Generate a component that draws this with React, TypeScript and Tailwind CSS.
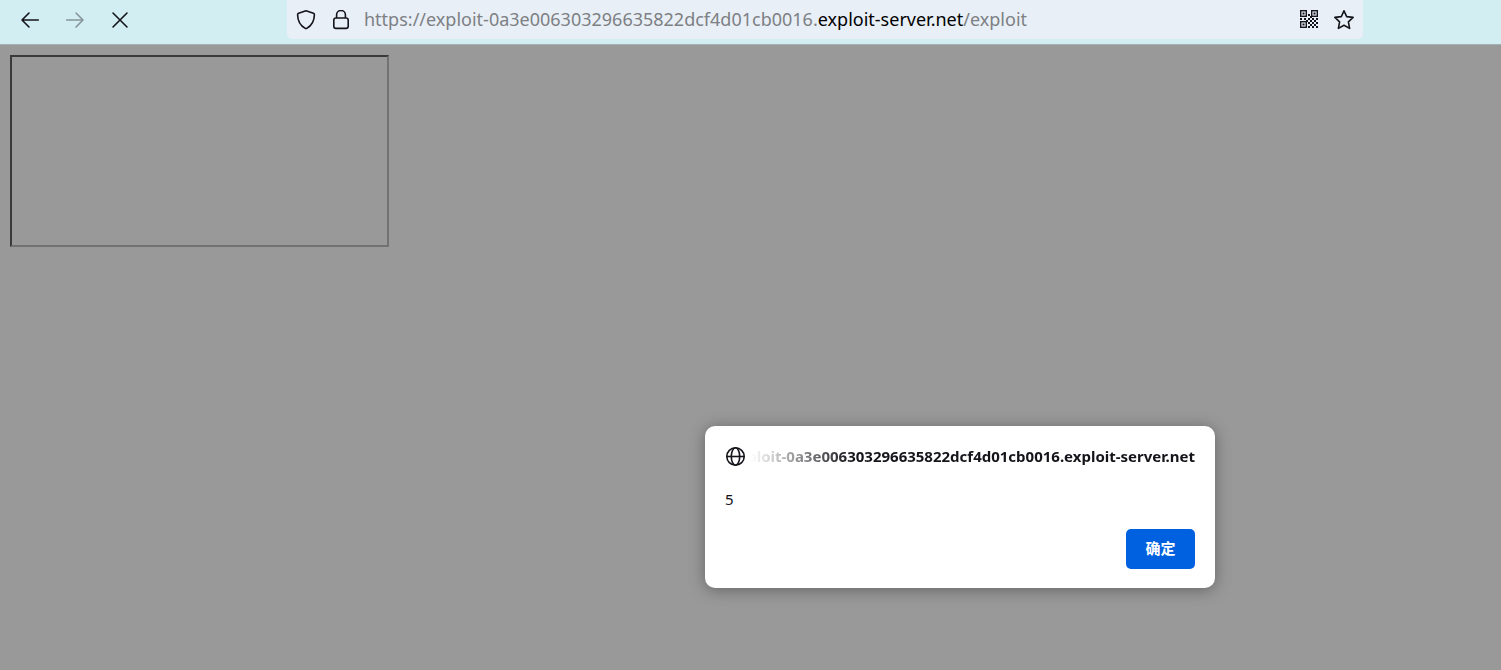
import React from "react";

const modules = [
  [8, 4], [8, 8], [4, 8], [0, 8],
  [12, 8], [16, 8], [10, 10], [14, 10], [8, 12], [12, 12], [16, 12],
  [10, 14], [14, 14], [8, 16], [12, 16], [16, 16], [10, 6], [6, 10],
];

function BackIcon() {
  return (
    <svg width="20" height="20" viewBox="0 0 20 20" fill="none" stroke="currentColor" strokeWidth="1.6" strokeLinecap="round" strokeLinejoin="round" aria-hidden="true">
      <path d="M18.3 10H2M9 3L2 10l7 7" />
    </svg>
  );
}

function ForwardIcon() {
  return (
    <svg width="20" height="20" viewBox="0 0 20 20" fill="none" stroke="currentColor" strokeWidth="1.6" strokeLinecap="round" strokeLinejoin="round" aria-hidden="true">
      <path d="M1.7 10H18M11 3l7 7-7 7" />
    </svg>
  );
}

function StopIcon() {
  return (
    <svg width="20" height="20" viewBox="0 0 20 20" fill="none" stroke="currentColor" strokeWidth="1.6" strokeLinecap="round" aria-hidden="true">
      <path d="M3 3l14 14M17 3L3 17" />
    </svg>
  );
}

function ShieldIcon() {
  return (
    <svg width="20" height="20" viewBox="0 0 20 20" fill="none" stroke="currentColor" strokeWidth="1.6" strokeLinejoin="round" aria-hidden="true">
      <path d="M10 .8L17.4 3.2q1 .4 1 1.500C18.3 11 15.500 15.700 10.700 18.400q-.7.400-1.400 0C4.500 15.700 1.700 11 1.600 4.700q0-1.100 1-1.500z" />
    </svg>
  );
}

function LockIcon() {
  return (
    <svg width="20" height="20" viewBox="0 0 20 20" fill="none" stroke="currentColor" strokeWidth="1.6" aria-hidden="true">
      <rect x="2.8" y="8" width="14.4" height="10.4" rx="2.2" />
      <path d="M5.6 8V4.700a4.400 4.200 0 0 1 8.800 0V8" />
    </svg>
  );
}

function QrIcon() {
  return (
    <svg width="18" height="18" viewBox="0 0 18 18" fill="currentColor" aria-hidden="true">
      {[[0, 0], [11, 0], [0, 11]].map(([x, y]) => (
        <g key={`${x}-${y}`}>
          <rect x={x + 0.7} y={y + 0.7} width="5.6" height="5.6" fill="none" stroke="currentColor" strokeWidth="1.4" />
          <rect x={x + 2.5} y={y + 2.5} width="2" height="2" />
        </g>
      ))}
      {modules.map(([x, y]) => (
        <rect key={`${x}-${y}`} x={x} y={y} width="2" height="2" />
      ))}
    </svg>
  );
}

function StarIcon() {
  return (
    <svg width="20" height="20" viewBox="0 0 20 20" fill="none" stroke="currentColor" strokeWidth="1.6" strokeLinejoin="round" aria-hidden="true">
      <path d="M10 .8l2.7 5.8 6.400.8-4.700 4.400 1.200 6.600L10 15.200l-5.600 3.200 1.200-6.600L.9 7.400l6.400-.8z" />
    </svg>
  );
}

function GlobeIcon() {
  return (
    <svg width="20" height="20" viewBox="0 0 20 20" fill="none" stroke="currentColor" strokeWidth="1.6" aria-hidden="true" className="shrink-0">
      <circle cx="10.5" cy="10.5" r="8.7" />
      <ellipse cx="10.5" cy="10.5" rx="4.2" ry="8.7" />
      <path d="M1.8 10.5h17.4" />
    </svg>
  );
}

function Toolbar() {
  return (
    <header className="flex h-[45px] items-start border-b border-[#a3b1b4] bg-[#d2eef2] text-[#15141a]">
      <nav aria-label="Navigation" className="flex h-10 w-[287px] shrink-0 items-center gap-[25px] pl-5">
        <button type="button" aria-label="Back"><BackIcon /></button>
        <button type="button" aria-label="Forward" disabled className="opacity-40"><ForwardIcon /></button>
        <button type="button" aria-label="Stop"><StopIcon /></button>
      </nav>
      <div className="mr-[138px] flex h-[39px] min-w-0 flex-1 items-center rounded-b-[5px] bg-[#e8eff6] px-[9px]">
        <button type="button" aria-label="Tracking protection" className="mr-[15px]"><ShieldIcon /></button>
        <button type="button" aria-label="Connection security" className="mr-[13px]"><LockIcon /></button>
        <div role="textbox" aria-label="Address" tabIndex={0} className="min-w-0 flex-1 truncate pb-[2px] text-[18px] leading-9 text-[#7d8084]">
          https://exploit-0a3e006303296635822dcf4d01cb0016.<span className="text-black">exploit-server.net</span>/exploit
        </div>
        <button type="button" aria-label="QR code" className="mr-[16px] pb-[2px]"><QrIcon /></button>
        <button type="button" aria-label="Bookmark"><StarIcon /></button>
      </div>
    </header>
  );
}

function AlertDialog() {
  return (
    <section role="alertdialog" aria-labelledby="origin" aria-describedby="message" className="absolute top-[426px] left-[705px] w-[510px] rounded-[10px] bg-white px-5 pt-[18px] pb-[19px] text-[15px] text-[#15141a] shadow-[0_2px_16px_rgba(0,0,0,0.35)]">
      <div className="flex items-center gap-[6px]">
        <GlobeIcon />
        <h1 id="origin" className="flex h-6 min-w-0 flex-1 items-center justify-end overflow-hidden font-bold whitespace-nowrap [mask-image:linear-gradient(to_right,transparent,black_100px)]">
          exploit-0a3e006303296635822dcf4d01cb0016.exploit-server.net
        </h1>
      </div>
      <p id="message" className="mt-[19px] leading-6">5</p>
      <div className="mt-[18px] flex justify-end">
        <button type="button" className="h-10 w-[69px] rounded-[5px] bg-[#0061e0] pb-[2px] font-bold text-white">确定</button>
      </div>
    </section>
  );
}

export default function App() {
  return (
    <div className="relative flex min-h-screen flex-col bg-[#99999a] font-['Noto_Sans','Noto_Sans_CJK_SC',sans-serif]">
      <Toolbar />
      <main className="flex-1 p-[10px]">
        <div className="h-[192px] w-[379px] border-2 border-t-[#3a3a3c] border-r-[#727274] border-b-[#727274] border-l-[#3a3a3c]" />
      </main>
      <AlertDialog />
    </div>
  );
}
